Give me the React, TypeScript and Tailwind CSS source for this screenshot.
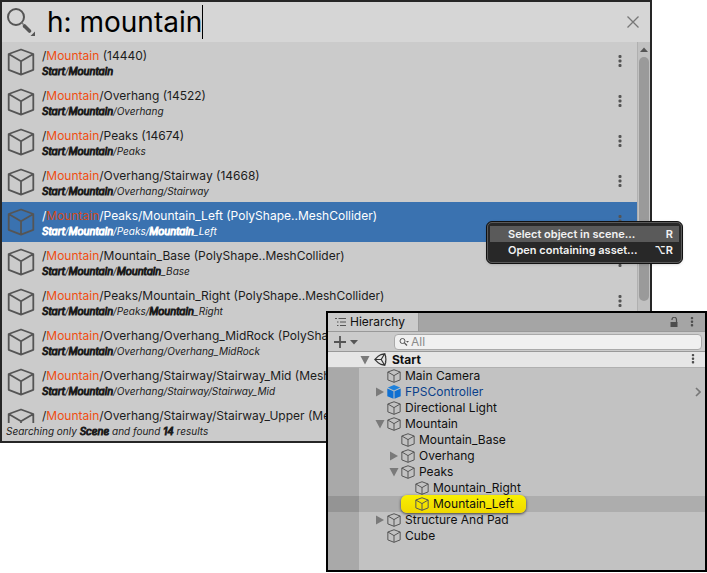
import type { ReactNode } from "react";

type Result = { path: string; detail: string; crumbs: string[]; selected?: boolean };

const results: Result[] = [
  { path: "", detail: " (14440)", crumbs: ["*Start", "/", "*Mountain"] },
  { path: "/Overhang", detail: " (14522)", crumbs: ["*Start", "/", "*Mountain", "/Overhang"] },
  { path: "/Peaks", detail: " (14674)", crumbs: ["*Start", "/", "*Mountain", "/Peaks"] },
  { path: "/Overhang/Stairway", detail: " (14668)", crumbs: ["*Start", "/", "*Mountain", "/Overhang/Stairway"] },
  {
    path: "/Peaks/Mountain_Left",
    detail: " (PolyShape..MeshCollider)",
    crumbs: ["*Start", "/", "*Mountain", "/Peaks/", "*Mountain", "_Left"],
    selected: true,
  },
  {
    path: "/Mountain_Base",
    detail: " (PolyShape..MeshCollider)",
    crumbs: ["*Start", "/", "*Mountain", "/", "*Mountain", "_Base"],
  },
  {
    path: "/Peaks/Mountain_Right",
    detail: " (PolyShape..MeshCollider)",
    crumbs: ["*Start", "/", "*Mountain", "/Peaks/", "*Mountain", "_Right"],
  },
  {
    path: "/Overhang/Overhang_MidRock",
    detail: " (PolyShape..MeshCollider)",
    crumbs: ["*Start", "/", "*Mountain", "/Overhang/Overhang_MidRock"],
  },
  {
    path: "/Overhang/Stairway/Stairway_Mid",
    detail: " (MeshCollider)",
    crumbs: ["*Start", "/", "*Mountain", "/Overhang/Stairway/Stairway_Mid"],
  },
  { path: "/Overhang/Stairway/Stairway_Upper", detail: " (MeshCollider)", crumbs: [] },
];

type TreeNode = {
  name: string;
  indent: string;
  fold?: "open" | "closed";
  prefab?: boolean;
  selected?: boolean;
};

const nodes: TreeNode[] = [
  { name: "Main Camera", indent: "pl-4" },
  { name: "FPSController", indent: "pl-4", fold: "closed", prefab: true },
  { name: "Directional Light", indent: "pl-4" },
  { name: "Mountain", indent: "pl-4", fold: "open" },
  { name: "Mountain_Base", indent: "pl-[30px]" },
  { name: "Overhang", indent: "pl-[30px]", fold: "closed" },
  { name: "Peaks", indent: "pl-[30px]", fold: "open" },
  { name: "Mountain_Right", indent: "pl-11" },
  { name: "Mountain_Left", indent: "pl-11", selected: true },
  { name: "Structure And Pad", indent: "pl-4", fold: "closed" },
  { name: "Cube", indent: "pl-4" },
];

function Cube({ className, stroke }: { className: string; stroke: number }) {
  return (
    <svg
      viewBox="0 0 28 28"
      className={className}
      fill="none"
      stroke="currentColor"
      strokeWidth={stroke}
      strokeLinejoin="round"
      aria-hidden="true"
    >
      <path d="M14 1.5 26.3 6v15.8L14 26.6 1.7 21.8V6zM1.7 6 14 13.2 26.3 6M14 13.2v13.4" />
    </svg>
  );
}

function PrefabCube() {
  return (
    <svg viewBox="0 0 14 14" className="size-3.5 shrink-0" aria-hidden="true">
      <path d="M7 0 13.2 2.6 7 5.4.8 2.6z" fill="#1f82dc" />
      <path d="M.3 3.4 6.5 6.2v7.6L.3 11.2zM13.7 3.4 7.5 6.2v7.6l6.2-2.6z" fill="#0f70d2" />
    </svg>
  );
}

function Kebab({ className }: { className: string }) {
  return (
    <svg viewBox="0 0 4 14" className={className} fill="currentColor" aria-hidden="true">
      <rect x=".5" y="0" width="3" height="3" rx="1" />
      <rect x=".5" y="4.5" width="3" height="3" rx="1" />
      <rect x=".5" y="9" width="3" height="3" rx="1" />
    </svg>
  );
}

function Strong({ children }: { children: ReactNode }) {
  return <span className="[-webkit-text-stroke:1px_currentColor]">{children}</span>;
}

function ResultRow({ result }: { result: Result }) {
  return (
    <li
      className={
        result.selected
          ? "flex h-10 items-center bg-[#3a72b0] pl-[5px] pr-3.5 text-white"
          : "flex h-10 items-center bg-[#cbcbcb] pl-[5px] pr-3.5 text-[#1c1c1c]"
      }
    >
      <Cube className="size-7 shrink-0 text-[#555555]" stroke={1.8} />
      <div className="min-w-0 flex-1 overflow-hidden whitespace-nowrap pb-1 pl-[7px] pt-1.5">
        <div className="text-[12px] leading-4">
          /<span className={result.selected ? "text-[#cf4a1c]" : "text-[#f04e12]"}>Mountain</span>
          {result.path}
          {result.detail}
        </div>
        <div className="h-3.5 text-[10px] italic leading-[14px]">
          {result.crumbs.map((c, i) =>
            c.startsWith("*") ? <Strong key={i}>{c.slice(1)}</Strong> : <span key={i}>{c}</span>,
          )}
        </div>
      </div>
      <button type="button" aria-label="More options" className="flex px-px text-[#555555]">
        <Kebab className="h-3.5 w-1" />
      </button>
    </li>
  );
}

function SearchWindow() {
  return (
    <section className="mr-[55px] border-2 border-[#262626] bg-[#cbcbcb]">
      <header className="flex h-10 items-center bg-[#d6d6d6] pl-[5px] pr-2.5">
        <svg viewBox="0 0 30 30" className="size-[30px] shrink-0" fill="none" aria-hidden="true">
          <circle cx="9" cy="10" r="8" stroke="#555" strokeWidth="2" />
          <path d="m14.5 15.5 2 2" stroke="#777" strokeWidth="1.5" />
          <path d="m17.5 19 5 5" stroke="#555" strokeWidth="3.6" strokeLinecap="round" />
          <path d="M28 24.500V29h-4.500z" fill="#555" />
        </svg>
        <div className="flex flex-1 items-center pl-2.5">
          <input
            type="text"
            aria-label="Search"
            defaultValue="h: mountain"
            className="h-9 bg-transparent text-[28px] leading-9 text-black outline-none [field-sizing:content]"
          />
          <span className="h-[34px] w-px bg-black" />
        </div>
        <button type="button" aria-label="Clear search" className="flex text-[#777777]">
          <svg viewBox="0 0 14 14" className="size-3.5" fill="none" stroke="currentColor" strokeWidth="1.3">
            <path d="m1.500 1.500 11 11M12.500 1.500l-11 11" />
          </svg>
        </button>
      </header>
      <div className="flex h-[381px] overflow-hidden">
        <ul className="min-w-0 flex-1">
          {results.map((r) => (
            <ResultRow key={r.path} result={r} />
          ))}
        </ul>
        <div className="flex w-[13px] shrink-0 flex-col items-center border-l border-[#b0b0b0] bg-[#c1c1c1]">
          <svg viewBox="0 0 8 15" className="h-[15px] w-2 shrink-0" aria-hidden="true">
            <path d="M4 5.500 8 10H0z" fill="#555" />
          </svg>
          <div className="h-[244px] w-2.5 rounded-full bg-[#9a9a9a]" />
        </div>
      </div>
      <footer className="h-[18px] pl-1 text-[10px] italic leading-4 text-[#1c1c1c]">
        Searching only <Strong>Scene</Strong> and found <Strong>14</Strong> results
      </footer>
    </section>
  );
}

function ContextMenu() {
  return (
    <div
      role="menu"
      className="absolute left-[486px] top-[221px] w-[197px] rounded-md border border-[#111111] bg-[#282828] text-[11px] font-semibold leading-4 text-[#f2f2f2] shadow"
    >
      <div className="rounded-[5px] border border-[#5a5a5a] px-0.5 pb-1 pt-[3px]">
        <button type="button" role="menuitem" className="flex w-full justify-between bg-[#5a5a5a] pl-[18px] pr-1.5">
          <span>Select object in scene...</span>
          <span>R</span>
        </button>
        <button type="button" role="menuitem" className="flex w-full justify-between pl-[18px] pr-1.5">
          <span>Open containing asset...</span>
          <span>⌥R</span>
        </button>
      </div>
    </div>
  );
}

function Foldout({ state, label }: { state: "open" | "closed"; label: string }) {
  return (
    <button type="button" aria-label={label} aria-expanded={state === "open"} className="flex size-2.5 shrink-0">
      <svg viewBox="0 0 10 10" className="size-2.5" fill="#7a7a7a">
        {state === "open" ? <path d="M.5 1h9L5 9.500z" /> : <path d="M1 .5 9 5 1 9.500z" />}
      </svg>
    </button>
  );
}

function NodeRow({ node }: { node: TreeNode }) {
  const body = (
    <>
      {node.prefab ? <PrefabCube /> : <Cube className="size-3.5 shrink-0 text-[#555555]" stroke={2} />}
      <span>{node.name}</span>
    </>
  );
  return (
    <li className={node.selected ? "flex h-4 bg-[#adadad]" : "flex h-4"}>
      <div className={node.selected ? "w-[31px] shrink-0 bg-[#949494]" : "w-[31px] shrink-0 bg-[#a9a9a9]"} />
      <div className={`flex flex-1 items-center ${node.indent}`}>
        <div className="flex w-3 shrink-0">
          {node.fold && <Foldout state={node.fold} label={`Toggle ${node.name}`} />}
        </div>
        {node.selected ? (
          <div className="z-10 -ml-3.5 flex h-[18px] items-center gap-1 rounded-md bg-linear-to-b from-[#f8f000] to-[#f0d800] pl-3.5 pr-3 shadow-[0_1px_3px_rgba(0,0,0,0.7)]">
            {body}
          </div>
        ) : (
          <div className={node.prefab ? "flex items-center gap-1 text-[#0a3f8a]" : "flex items-center gap-1"}>
            {body}
          </div>
        )}
      </div>
      {node.prefab && (
        <button type="button" aria-label="Open prefab" className="flex items-center pr-1 text-[#777777]">
          <svg viewBox="0 0 6 10" className="h-2.5 w-1.5" fill="none" stroke="currentColor" strokeWidth="1.6">
            <path d="m1 1 4 4-4 4" />
          </svg>
        </button>
      )}
    </li>
  );
}

function HierarchyPanel() {
  return (
    <section className="absolute left-[326px] right-0 top-[311px] border-2 border-black bg-[#c2c2c2] text-[12px] leading-4 text-[#101010]">
      <div className="flex h-[18px] items-stretch bg-[#a5a5a5]">
        <div className="flex w-[91px] items-center gap-1 border-r border-[#999999] bg-[#cbcbcb] pl-[7px]">
          <svg viewBox="0 0 11 10" className="h-2.5 w-[11px]" fill="none" stroke="#555" aria-hidden="true">
            <path d="M0 1.500h2M3.500 1.500H11M2 5h1.500M5 5h6M2 8.500h1.500M5 8.500h6" />
          </svg>
          <h2>Hierarchy</h2>
        </div>
        <div className="flex flex-1 items-center justify-end gap-3 pr-[11px] text-[#4d4d4d]">
          <button type="button" aria-label="Lock" className="flex">
            <svg viewBox="0 0 8 10" className="h-2.5 w-2" fill="none">
              <path d="M2 3V2.500a2 2 0 0 1 4.500 0V6" stroke="currentColor" strokeWidth="1.2" />
              <path d="M.5 5h7v5h-7z" fill="currentColor" />
            </svg>
          </button>
          <button type="button" aria-label="Panel menu" className="flex">
            <Kebab className="h-[11px] w-1" />
          </button>
        </div>
      </div>
      <div className="flex h-[21px] items-center border-b border-t border-[#999999] bg-[#cbcbcb] pl-1.5 pr-[3px]">
        <button type="button" aria-label="Create" className="flex">
          <svg viewBox="0 0 24 12" className="h-3 w-6" fill="none">
            <path d="M6 0v12M0 6h12" stroke="#555" strokeWidth="1.800" />
            <path d="M16 4h8l-4 4.500z" fill="#555" />
          </svg>
        </button>
        <label className="ml-9 flex h-4 flex-1 items-center gap-0.5 rounded border border-[#a9a9a9] bg-[#f0f0f0] pl-1">
          <svg viewBox="0 0 10 10" className="size-2.5 shrink-0" fill="none" aria-hidden="true">
            <circle cx="3.500" cy="4" r="2.500" stroke="#555" />
            <path d="m5.500 6 2.500 2.500" stroke="#555" strokeWidth="1.300" />
            <path d="M7 4h3L8.500 5.800z" fill="#555" />
          </svg>
          <input
            type="text"
            aria-label="Search hierarchy"
            placeholder="All"
            className="h-3.5 min-w-0 flex-1 bg-transparent outline-none placeholder:text-[#8a8a8a]"
          />
        </label>
      </div>
      <div className="flex h-4 items-center border-b border-[#b0b0b0] bg-[#e6e6e6] pl-8 pr-2.5">
        <Foldout state="open" label="Toggle Start" />
        <svg viewBox="0 0 13 13" className="ml-1 size-[13px]" fill="none" stroke="#333" strokeWidth="1.200" aria-hidden="true">
          <path d="M3.800 3.600 7 1.600 10.800.8l1.100 3.600M3.800 9.400 7 11.400l3.800.8 1.100-3.600M4 3.400.8 6.500 4 9.600M.8 6.500H7.200M7.200 6.500 10.500 1M7.200 6.500l3.300 5.500M11.400 3.600a9 9 0 0 1 0 5.800" />
        </svg>
        <span className="flex-1 pl-[5px] font-bold">Start</span>
        <button type="button" aria-label="Scene menu" className="flex text-[#4d4d4d]">
          <Kebab className="h-[11px] w-1" />
        </button>
      </div>
      <ul>
        {nodes.map((n) => (
          <NodeRow key={n.name} node={n} />
        ))}
      </ul>
      <div className="h-[26px]">
        <div className="h-full w-[31px] bg-[#a9a9a9]" />
      </div>
    </section>
  );
}

export default function App() {
  return (
    <main className="relative min-h-screen overflow-hidden bg-white font-['Inter','Liberation_Sans',sans-serif]">
      <SearchWindow />
      <ContextMenu />
      <HierarchyPanel />
    </main>
  );
}
